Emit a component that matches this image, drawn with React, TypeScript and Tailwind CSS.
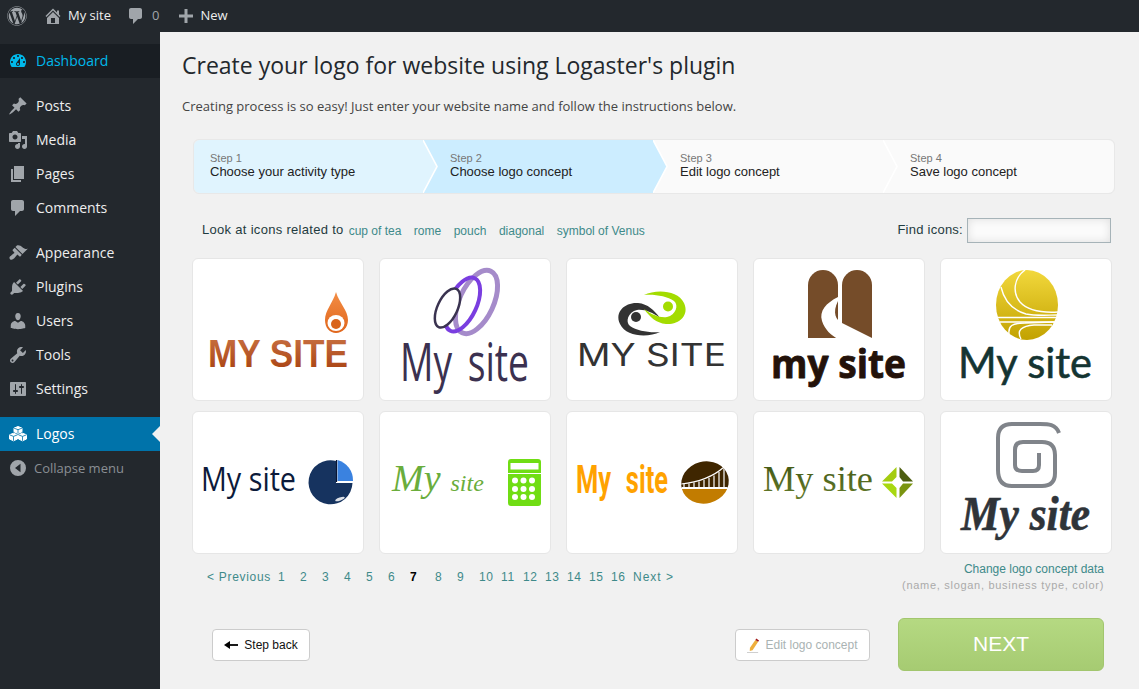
import { ReactNode } from 'react';
import { FaWordpress } from 'react-icons/fa';

const OPEN = '[font-family:"Open_Sans",sans-serif]';

const paths = {
  dashboard:
    'M3.76 16h12.48c1.1-1.37 1.76-3.11 1.76-5 0-4.42-3.58-8-8-8s-8 3.58-8 8c0 1.89.66 3.63 1.76 5zM10 4c.55 0 1 .45 1 1s-.45 1-1 1-1-.45-1-1 .45-1 1-1zM6 6c.55 0 1 .45 1 1s-.45 1-1 1-1-.45-1-1 .45-1 1-1zm8 0c.55 0 1 .45 1 1s-.45 1-1 1-1-.45-1-1 .45-1 1-1zm-5.37 5.55L12 7v6c0 1.1-.9 2-2 2s-2-.9-2-2c0-.57.24-1.08.63-1.45zM4 10c.55 0 1 .45 1 1s-.45 1-1 1-1-.45-1-1 .45-1 1-1zm12 0c.55 0 1 .45 1 1s-.45 1-1 1-1-.45-1-1 .45-1 1-1zm-5 3c0-.55-.45-1-1-1s-1 .45-1 1 .45 1 1 1 1-.45 1-1z',
  post: 'M10.44 3.02l1.82-1.82 6.36 6.35-1.83 1.82c-1.05-.68-2.48-.57-3.41.36l-.75.75c-.92.93-1.04 2.35-.35 3.41l-1.83 1.82-2.41-2.41-2.8 2.79c-.42.42-3.38 2.71-3.8 2.29s1.86-3.39 2.28-3.81l2.79-2.79L4.1 9.36l1.83-1.82c1.05.69 2.48.57 3.4-.36l.75-.75c.93-.92 1.05-2.35.36-3.41z',
  media:
    'M13 11V4c0-.55-.45-1-1-1h-1.67L9 1H5L3.67 3H2c-.55 0-1 .45-1 1v7c0 .55.45 1 1 1h10c.55 0 1-.45 1-1zM7 4.5c1.38 0 2.5 1.12 2.5 2.5S8.38 9.5 7 9.5 4.5 8.38 4.5 7 5.62 4.5 7 4.5zM14 6h5v10.5c0 1.38-1.12 2.5-2.5 2.5S14 17.88 14 16.5s1.12-2.5 2.5-2.5c.17 0 .34.02.5.05V9h-3V6zm-4 8.05V13h2v3.5c0 1.38-1.12 2.5-2.5 2.5S7 17.88 7 16.5 8.12 14 9.5 14c.17 0 .34.02.5.05z',
  page: 'M6 15V2h10v13H6zm-1 1h8v2H3V5h2v11z',
  comment: 'M5 2h9c1.1 0 2 .9 2 2v7c0 1.1-.9 2-2 2h-2l-5 5v-5H5c-1.1 0-2-.9-2-2V4c0-1.1.9-2 2-2z',
  appearance:
    'M14.48 11.06L7.41 3.99l1.5-1.5c.5-.56 2.3-.47 3.51.32 1.21.8 1.43 1.28 2.91 2.1 1.18.64 2.45 1.26 4.45.85zm-.71.71L6.7 4.7 4.93 6.47c-.39.39-.39 1.02 0 1.41l1.06 1.06c.39.39.39 1.03 0 1.42-.6.6-1.43 1.11-2.21 1.69-.35.26-.7.53-1.01.84C1.43 13.23.99 15.13 2 16.14c1.01 1 2.91.57 4.25-.77.31-.31.58-.66.84-1.01.58-.78 1.09-1.61 1.69-2.21.39-.39 1.02-.39 1.41 0l1.06 1.06c.39.39 1.02.39 1.41 0z',
  plugin:
    'M13.11 4.36L9.87 7.6 8 5.73l3.24-3.24c.35-.34 1.05-.2 1.56.32.52.51.66 1.21.31 1.55zm-8 1.77l.91-1.12 9.01 9.01-1.19.84c-.71.71-2.63 1.16-3.82 1.16H6.14L4.9 17.26c-.59.59-1.54.59-2.12 0-.59-.58-.59-1.53 0-2.12l1.24-1.24v-3.88c0-1.13.4-3.19 1.09-3.89zm7.26 3.97l3.24-3.24c.34-.35 1.04-.21 1.55.31.52.51.66 1.21.31 1.55l-3.24 3.25z',
  user: 'M10 9.25c-2.27 0-2.73-3.44-2.73-3.44C7 4.02 7.82 2 9.97 2c2.16 0 2.98 2.02 2.71 3.81 0 0-.41 3.44-2.68 3.44zm0 2.57L12.72 10c2.39 0 4.52 2.33 4.52 4.53v2.49s-3.65 1.13-7.24 1.13c-3.65 0-7.24-1.13-7.24-1.13v-2.49c0-2.25 1.94-4.48 4.47-4.48z',
  tools:
    'M16.68 9.77c-1.34 1.34-3.3 1.67-4.95.99l-5.41 6.52c-.99.99-2.59.99-3.58 0s-.99-2.59 0-3.57l6.52-5.42c-.68-1.65-.35-3.61.99-4.95 1.28-1.28 3.12-1.62 4.72-1.06l-2.89 2.89 2.82 2.82 2.86-2.87c.53 1.58.18 3.39-1.08 4.65zM3.81 16.21c.4.39 1.04.39 1.43 0 .4-.4.4-1.04 0-1.43-.39-.4-1.03-.4-1.43 0-.39.39-.39 1.03 0 1.43z',
  settings:
    'M18 16V4c0-.55-.45-1-1-1H3c-.55 0-1 .45-1 1v12c0 .55.45 1 1 1h14c.55 0 1-.45 1-1zM8 11h1c.55 0 1 .45 1 1s-.45 1-1 1H8v1.5c0 .28-.22.5-.5.5s-.5-.22-.5-.5V13H6c-.55 0-1-.45-1-1s.45-1 1-1h1V5.5c0-.28.22-.5.5-.5s.5.22.5.5V11zm5-2h-1c-.55 0-1-.45-1-1s.45-1 1-1h1V5.5c0-.28.22-.5.5-.5s.5.22.5.5V7h1c.55 0 1 .45 1 1s-.45 1-1 1h-1v5.5c0 .28-.22.5-.5.5s-.5-.22-.5-.5V9z',
  home: 'M16 8.5l1.53 1.53-1.06 1.06L10 4.62l-6.47 6.47-1.06-1.06L10 2.5l4 4v-2h2v4zm-6-2.46l6 5.99V18H4v-5.97zM12 17v-5H8v5h4z',
  plus: 'M17 8.5v3h-5.5V17h-3v-5.5H3v-3h5.5V3h3v5.5z',
};

function Dash({ d, className }: { d: string; className: string }) {
  return (
    <svg viewBox="0 0 20 20" className={className} fill="currentColor">
      <path d={d} />
    </svg>
  );
}

function CubesIcon() {
  return (
    <svg viewBox="0 0 20 20" className="w-5 h-5 shrink-0" fill="none" stroke="#fff" strokeWidth="1" strokeLinejoin="round">
      <path d="M10 2.5l4 1.6v3.7l-4 1.7-4-1.7V4.1z" fill="#fff" />
      <path d="M6 4.1l4 1.6 4-1.6M10 5.7v3.8" stroke="#0073aa" strokeWidth="0.8" />
      <path d="M5.5 9.2l4 1.6v4.2l-4 1.8-4-1.8v-4.2z" fill="#fff" />
      <path d="M1.5 10.8l4 1.6 4-1.6M5.5 12.4v4.4" stroke="#0073aa" strokeWidth="0.8" />
      <path d="M14.5 9.2l4 1.6v4.2l-4 1.8-4-1.8v-4.2z" fill="#fff" />
      <path d="M10.5 10.8l4 1.6 4-1.6M14.5 12.4v4.4" stroke="#0073aa" strokeWidth="0.8" />
    </svg>
  );
}

function MenuItem({ d, label }: { d: string; label: string }) {
  return (
    <div className="flex items-center h-[34px] pl-2 text-[#eeeeee] text-sm">
      <Dash d={d} className="w-5 h-5 text-[#a0a5aa] shrink-0" />
      <span className="ml-2">{label}</span>
    </div>
  );
}

function Sidebar() {
  return (
    <aside className={`w-40 shrink-0 bg-[#23282d] pt-3 ${OPEN}`}>
      <div className="flex items-center h-[34px] pl-2 bg-[#191e23] text-[#00b9eb] text-sm">
        <Dash d={paths.dashboard} className="w-5 h-5 shrink-0" />
        <span className="ml-2">Dashboard</span>
      </div>
      <div className="mt-[11px]">
        <MenuItem d={paths.post} label="Posts" />
        <MenuItem d={paths.media} label="Media" />
        <MenuItem d={paths.page} label="Pages" />
        <MenuItem d={paths.comment} label="Comments" />
      </div>
      <div className="mt-[11px]">
        <MenuItem d={paths.appearance} label="Appearance" />
        <MenuItem d={paths.plugin} label="Plugins" />
        <MenuItem d={paths.user} label="Users" />
        <MenuItem d={paths.tools} label="Tools" />
        <MenuItem d={paths.settings} label="Settings" />
      </div>
      <div className="relative mt-[11px] flex items-center h-[34px] pl-2 bg-[#0073aa] text-white text-sm">
        <CubesIcon />
        <span className="ml-2">Logos</span>
        <span className="absolute right-0 top-[9px] border-y-[8px] border-r-[8px] border-y-transparent border-r-[#f1f1f1]" />
      </div>
      <div className="flex items-center h-[34px] pl-[10px] text-[13px] text-[#8a8f94]">
        <svg viewBox="0 0 16 16" className="w-4 h-4 shrink-0">
          <path fillRule="evenodd" fill="#a0a5aa" d="M8 0a8 8 0 1 1 0 16A8 8 0 0 1 8 0zm2.5 3.8L5 8l5.5 4.2z" />
        </svg>
        <span className="ml-2 pt-[1px]">Collapse menu</span>
      </div>
    </aside>
  );
}

function AdminBar() {
  return (
    <header className={`flex items-center h-8 shrink-0 bg-[#23282d] text-[13px] text-[#eeeeee] ${OPEN}`}>
      <FaWordpress className="ml-[7px] w-5 h-5 text-[#a0a5aa]" />
      <Dash d={paths.home} className="ml-[16px] w-5 h-5 text-[#a0a5aa]" />
      <span className="ml-[5px]">My site</span>
      <Dash d={paths.comment} className="ml-[15px] w-5 h-5 text-[#a0a5aa]" />
      <span className="ml-[6px] text-[#a0a5aa]">0</span>
      <Dash d={paths.plus} className="ml-[17px] w-5 h-5 text-[#a0a5aa]" />
      <span className="ml-[4px]">New</span>
    </header>
  );
}

const steps = [
  { n: 'Step 1', t: 'Choose your activity type', w: 'w-[230px] pl-[16px] bg-[#e0f4fe] rounded-l-[6px]', fill: '#e0f4fe', line: '#ffffff' },
  { n: 'Step 2', t: 'Choose logo concept', w: 'w-[230px] pl-[26px] bg-[#ccedff]', fill: '#ccedff', line: '#ffffff' },
  { n: 'Step 3', t: 'Edit logo concept', w: 'w-[230px] pl-[26px] bg-[#fafafa]', fill: '#fafafa', line: '#ffffff' },
  { n: 'Step 4', t: 'Save logo concept', w: 'flex-1 pl-[26px] bg-[#fafafa] rounded-r-[6px]', fill: '', line: '' },
];

function Steps() {
  return (
    <div className="ml-[11px] mt-6 w-[922px] h-[55px] flex border border-[#e8e8e8] rounded-[6px]">
      {steps.map((s) => (
        <div key={s.n} className={`relative flex flex-col justify-center pb-1 ${s.w}`}>
          <div className="text-[11px] leading-[13px] text-[#777777]">{s.n}</div>
          <div className="text-[13px] leading-[13px] text-[#222222]">{s.t}</div>
          {s.fill && (
            <svg viewBox="0 0 16 53" className="absolute left-full top-0 w-4 h-[53px] z-10 -ml-[1px]">
              <path d="M0 0L14 26.5 0 53z" fill={s.fill} />
              <path d="M0 0L14 26.5 0 53" fill="none" stroke={s.line} strokeWidth="1.6" />
            </svg>
          )}
        </div>
      ))}
    </div>
  );
}

function Card({ box, children }: { box: string; children: ReactNode }) {
  return (
    <div className="h-[143px] bg-white border border-[#e6e6e6] rounded-[6px]">
      <svg viewBox={box} className="block w-[170px] h-[141px]">
        {children}
      </svg>
    </div>
  );
}

const SWIRL =
  'M660 332C648 338 626 337 620 324C614 311 626 302 638 303C648 304 654 310 660 318C652 312 644 309 637 310C628 312 625 322 630 326C637 331 650 333 660 332Z';

function Logos() {
  return (
    <div className="ml-[10px] mt-[15px] w-[920px] grid grid-cols-[repeat(5,172px)] gap-x-[15px] gap-y-[10px]">
      <Card box="193 259 170 141">
        <defs>
          <linearGradient id="a1" x1="0" y1="0" x2="0" y2="1">
            <stop offset="0" stopColor="#cc7648" />
            <stop offset="1" stopColor="#a53d0c" />
          </linearGradient>
          <linearGradient id="a2" x1="0" y1="0" x2="0" y2="1">
            <stop offset="0" stopColor="#f38d45" />
            <stop offset="1" stopColor="#e0661c" />
          </linearGradient>
        </defs>
        <path d="M336 292C333 303 325 310 325 320C325 328 330 333 336 333C342 333 348 328 348 320C348 310 339 303 336 292Z" fill="url(#a2)" />
        <ellipse cx="336" cy="323" rx="8.5" ry="8" fill="#fff" />
        <circle cx="336" cy="324" r="5" fill="#d9641c" />
        <text transform="translate(208 367) scale(1 1.1)" fontFamily="Liberation Sans" fontWeight="700" fontSize="36" textLength="140" lengthAdjust="spacingAndGlyphs" fill="url(#a1)">MY SITE</text>
      </Card>
      <Card box="380 259 170 141">
        <ellipse cx="476.5" cy="302" rx="17" ry="34" transform="rotate(25 476.5 302)" fill="none" stroke="#a58bca" strokeWidth="5" />
        <ellipse cx="462.5" cy="304.5" rx="14" ry="29" transform="rotate(25 462.5 304.5)" fill="none" stroke="#7a3ee0" strokeWidth="4" />
        <ellipse cx="447.5" cy="308" rx="10" ry="21" transform="rotate(25 447.5 308)" fill="#fff" stroke="#3a3350" strokeWidth="2.5" />
        <text transform="translate(400 381) scale(1 1.4)" fontFamily="Open Sans" fontWeight="400" fontSize="38" wordSpacing="6" textLength="129" lengthAdjust="spacingAndGlyphs" fill="#3b3150">My site</text>
      </Card>
      <Card box="567 259 170 141">
        <path d={SWIRL} fill="#333333" />
        <circle cx="636" cy="317" r="5" fill="#333333" />
        <path d={SWIRL} transform="rotate(180 652 313.5)" fill="#a3dc00" />
        <circle cx="668" cy="306.5" r="5" fill="#a3dc00" />
        <text x="577" y="366" fontFamily="Inter" fontWeight="400" fontSize="31" textLength="149" lengthAdjust="spacingAndGlyphs" fill="#333333">MY SITE</text>
      </Card>
      <Card box="754 259 170 141">
        <path d="M808 338V285a15 15 0 0 1 30 0V338Z" fill="#754c29" />
        <path d="M842 323V285a15 15 0 0 1 30 0V338Z" fill="#754c29" />
        <path d="M838 297C826 303 819 311 822 321C825 330 831 335 838 339L842 338V323C836 320 832 313 838 301Z" fill="#fff" />
        <text transform="translate(771 378) scale(1 1.05)" fontFamily="Open Sans" fontWeight="700" fontSize="37" stroke="#23120a" strokeWidth="0.8" strokeLinejoin="round" textLength="135" lengthAdjust="spacingAndGlyphs" fill="#23120a">my site</text>
      </Card>
      <Card box="941 259 170 141">
        <defs>
          <linearGradient id="e1" x1="0" y1="0" x2="0" y2="1">
            <stop offset="0" stopColor="#f2d83c" />
            <stop offset="1" stopColor="#c2a200" />
          </linearGradient>
        </defs>
        <ellipse cx="1027" cy="305" rx="31" ry="35" fill="url(#e1)" />
        <g fill="none" stroke="#fff" strokeWidth="1.4">
          <path d="M1025 270C1014 278 1012 292 1020 302C1027 310 1040 313 1058 312" />
          <path d="M1001 287C1004 300 1012 310 1026 314C1036 316 1048 315 1058 315" />
          <path d="M996 317.5H1057M1000 322H1055" />
          <path d="M1009 334C1008 326 1012 323 1025 323L1054 322" />
          <path d="M1021 339C1016 330 1022 326 1034 325L1052 325" />
        </g>
        <text x="958" y="378" fontFamily="Lato" fontSize="43" stroke="#143432" strokeWidth="0.6" textLength="134" lengthAdjust="spacingAndGlyphs" fill="#143432">My site</text>
      </Card>

      <Card box="193 412 170 141">
        <text x="201" y="491" fontFamily="Open Sans" fontWeight="400" fontSize="33" textLength="95" lengthAdjust="spacingAndGlyphs" fill="#0c1a3a">My site</text>
        <path d="M336 461A22 22 0 1 0 352.500 483L336 483Z" fill="#16335f" />
        <path d="M337.500 460A21 21 0 0 1 353 481L337.500 481Z" fill="#3a82e0" />
        <path d="M336.500 460V482" stroke="#0a1430" strokeWidth="1.200" />
        <ellipse cx="340" cy="499" rx="5" ry="1.500" transform="rotate(-20 340 499)" fill="#fff" opacity="0.85" />
      </Card>
      <Card box="380 412 170 141">
        <text x="392" y="491" fontFamily="Liberation Serif" fontStyle="italic" fill="#6aad3c">
          <tspan fontSize="38">My</tspan>
          <tspan fontSize="24" dx="10">site</tspan>
        </text>
        <rect x="508" y="459" width="33" height="47" rx="3" fill="#70dd14" />
        <rect x="510.500" y="463" width="28" height="6.500" fill="#fff" />
        <rect x="508" y="473" width="33" height="1" fill="#fff" />
        {[515, 523.5, 532].map((x) =>
          [480.5, 489, 497].map((y) => <circle key={`${x}-${y}`} cx={x} cy={y} r="3" fill="#fff" />),
        )}
      </Card>
      <Card box="567 412 170 141">
        <defs>
          <clipPath id="h1">
            <ellipse cx="705" cy="482.500" rx="24" ry="21" transform="rotate(-15 705 482.500)" />
          </clipPath>
        </defs>
        <text transform="translate(576 493) scale(1 1.44)" fontFamily="Roboto" fontWeight="700" fontSize="27" wordSpacing="9" textLength="92" lengthAdjust="spacingAndGlyphs" fill="#ffa200">My site</text>
        <g clipPath="url(#h1)">
          <rect x="680" y="458" width="50" height="30" fill="#3f2600" />
          <rect x="680" y="489" width="50" height="18" fill="#c27c00" />
          <path d="M681 484C700 482 714 476 724 467" fill="none" stroke="#fff" strokeWidth="1.200" />
          <path d="M684 483.500V488M689 483.500V488M694 482.500V488M699 481.500V488M704 480V488M709 478V488M714 475.500V488M719 472V488M724 468V488" stroke="#fff" strokeWidth="1.200" />
          <rect x="680" y="487" width="50" height="2" fill="#fff" />
        </g>
      </Card>
      <Card box="754 412 170 141">
        <defs>
          <linearGradient id="i1" x1="0" y1="0" x2="0" y2="1">
            <stop offset="0" stopColor="#3e5410" />
            <stop offset="1" stopColor="#667c2c" />
          </linearGradient>
        </defs>
        <text x="763" y="491" fontFamily="Liberation Serif" fontSize="36" textLength="110" lengthAdjust="spacingAndGlyphs" fill="url(#i1)">My site</text>
        <path d="M896.500 467L882 481.500H892L896.500 477Z" fill="#a4cc10" />
        <path d="M899.500 467L913 481.500H903L899.500 477Z" fill="#4d5e10" />
        <path d="M896.500 498L882 483.500H892L896.500 488Z" fill="#a8d810" />
        <path d="M899.500 498L913 483.500H903L899.500 488Z" fill="#7a9410" />
      </Card>
      <Card box="941 412 170 141">
        <path d="M1059 433C1056 424 1048 424 1040 424H1012Q998 424 998 438V470Q998 486 1012 486H1042Q1055 486 1055 473V455Q1055 442 1042 442H1023Q1015 442 1015 450V465Q1015 471 1022 471H1033Q1039 471 1039 465V453" fill="none" stroke="#80848a" strokeWidth="4" />
        <text x="961" y="530" fontFamily="Liberation Serif" fontWeight="700" fontStyle="italic" fontSize="48" stroke="#2f3439" strokeWidth="0.6" textLength="129" lengthAdjust="spacingAndGlyphs" fill="#2f3439">My site</text>
      </Card>
    </div>
  );
}

const tags = ['cup of tea', 'rome', 'pouch', 'diagonal', 'symbol of Venus'];
const pages = ['1', '2', '3', '4', '5', '6'];
const pagesAfter = ['8', '9', '10', '11', '12', '13', '14', '15', '16'];

export default function App() {
  return (
    <div className="h-screen overflow-hidden flex flex-col bg-[#f1f1f1] font-['Liberation_Sans',sans-serif]">
      <AdminBar />
      <div className="flex flex-1 min-h-0">
        <Sidebar />
        <main className="flex-1 pl-[22px] pt-[18px]">
          <h1 className={`text-[23px] leading-[30px] text-[#23282d] ${OPEN}`}>Create your logo for website using Logaster's plugin</h1>
          <p className={`mt-[17px] text-[13px] leading-[18px] text-[#444444] ${OPEN}`}>
            Creating process is so easy! Just enter your website name and follow the instructions below.
          </p>
          <Steps />

          <div className="ml-5 mt-6 w-[909px] h-[25px] flex items-center justify-between">
            <div className="flex items-center">
              <span className="pb-[1px] text-[13px] tracking-[0.3px] text-[#1f3b40]">Look at icons related to</span>
              <div className="ml-[5px] flex gap-[12.500px] text-[12px] text-[#3e8a8a]">
                {tags.map((t) => (
                  <span key={t}>{t}</span>
                ))}
              </div>
            </div>
            <div className="flex items-center gap-[4px]">
              <span className="pb-[1px] text-[13px] tracking-[0.25px] text-[#1f3b40]">Find icons:</span>
              <input className="w-[144px] h-[25px] bg-[#fbfbfb] border border-[#a6b3b8] shadow-[inset_0_0_8px_#dddddd]" />
            </div>
          </div>

          <Logos />

          <div className="ml-[10px] mt-[7px] w-[920px] pl-[15px] pr-[8px] h-8 flex items-center justify-between text-[12px] tracking-[0.7px] text-[#3e8a8a]">
            <div className="flex items-center">
              <span className="w-[71px]">&lt; Previous</span>
              {pages.map((p) => (
                <span key={p} className="w-[22px]">{p}</span>
              ))}
              <span className="w-[25px] font-bold text-black">7</span>
              {pagesAfter.map((p) => (
                <span key={p} className="w-[22px]">{p}</span>
              ))}
              <span className="tracking-[1px]">Next &gt;</span>
            </div>
            <div className="text-right leading-4">
              <div className="text-[12px] tracking-normal">Change logo concept data</div>
              <div className="text-[11px] tracking-[0.7px] text-[#aaaaaa]">(name, slogan, business type, color)</div>
            </div>
          </div>

          <div className="ml-[30px] mt-[25px] w-[892px] h-[53px] flex items-center">
            <button className="w-[98px] h-8 flex items-center justify-center gap-[6px] pt-[1px] bg-white border border-[#cccccc] rounded-[4px] text-[12px] text-[#111111]">
              <svg viewBox="0 0 14 10" className="w-[14px] h-[10px]">
                <path d="M14 5H4" fill="none" stroke="#000" strokeWidth="1.800" />
                <path d="M6 1L0 5l6 4z" fill="#000" />
              </svg>
              Step back
            </button>
            <button className="ml-auto w-[135px] h-8 flex items-center justify-center gap-[5px] pt-[1px] bg-white border border-[#cccccc] rounded-[4px] text-[12px] text-[#aab3b3]">
              <svg viewBox="0 0 14 16" className="w-[13px] h-[15px]">
                <path d="M9 2l3 2-6 9-3 1 .2-3.500z" fill="#eeae3c" />
                <path d="M9 2l1-1.500 3 2L12 4z" fill="#a01818" />
                <path d="M0 15h12v1H0z" fill="#cccccc" />
              </svg>
              Edit logo concept
            </button>
            <button className="ml-[28px] w-[206px] h-[53px] pb-[2px] rounded-[6px] border border-[#a2c66e] bg-linear-to-b from-[#b5d982] to-[#a6cb72] text-[21px] text-white">
              NEXT
            </button>
          </div>
        </main>
      </div>
    </div>
  );
}
